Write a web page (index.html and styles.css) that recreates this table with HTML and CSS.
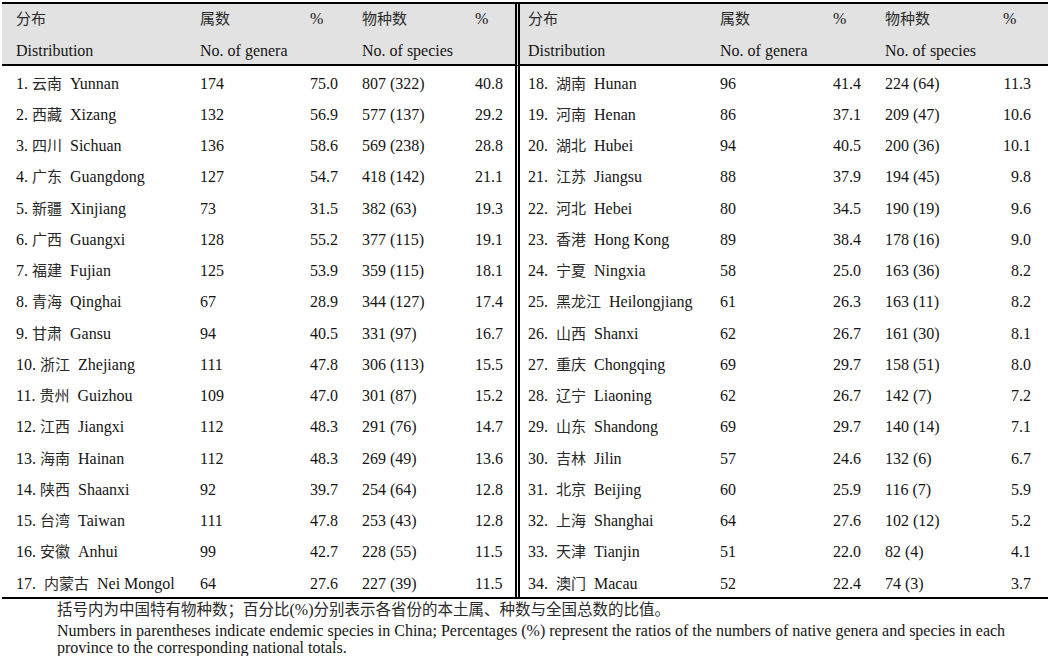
FILE: index.html
```html
<!DOCTYPE html>
<html lang="zh">
<head>
<meta charset="utf-8">
<title>Distribution table</title>
<link rel="stylesheet" href="styles.css">
</head>
<body>
<div class="page">
<table class="dist">
<colgroup>
<col class="c1"><col class="c2"><col class="c3"><col class="c4"><col class="c5">
<col class="c6"><col class="c7"><col class="c8"><col class="c9"><col class="c10">
</colgroup>
<thead>
<tr class="h1">
<th class="first"><span class="zh">分布</span></th><th><span class="zh">属数</span></th><th>%</th><th><span class="zh">物种数</span></th><th>%</th>
<th class="split"><span class="zh">分布</span></th><th><span class="zh">属数</span></th><th>%</th><th><span class="zh">物种数</span></th><th>%</th>
</tr>
<tr class="h2">
<th class="first">Distribution</th><th>No. of genera</th><th></th><th>No. of species</th><th></th>
<th class="split">Distribution</th><th>No. of genera</th><th></th><th>No. of species</th><th></th>
</tr>
</thead>
<tbody>
<tr><td class="first">1. <span class="zh">云南</span>&nbsp; Yunnan</td><td>174</td><td>75.0</td><td>807 (322)</td><td>40.8</td><td class="split">18.&nbsp; <span class="zh">湖南</span>&nbsp; Hunan</td><td>96</td><td>41.4</td><td>224 (64)</td><td class="last">11.3</td></tr>
<tr><td class="first">2. <span class="zh">西藏</span>&nbsp; Xizang</td><td>132</td><td>56.9</td><td>577 (137)</td><td>29.2</td><td class="split">19.&nbsp; <span class="zh">河南</span>&nbsp; Henan</td><td>86</td><td>37.1</td><td>209 (47)</td><td class="last">10.6</td></tr>
<tr><td class="first">3. <span class="zh">四川</span>&nbsp; Sichuan</td><td>136</td><td>58.6</td><td>569 (238)</td><td>28.8</td><td class="split">20.&nbsp; <span class="zh">湖北</span>&nbsp; Hubei</td><td>94</td><td>40.5</td><td>200 (36)</td><td class="last">10.1</td></tr>
<tr><td class="first">4. <span class="zh">广东</span>&nbsp; Guangdong</td><td>127</td><td>54.7</td><td>418 (142)</td><td>21.1</td><td class="split">21.&nbsp; <span class="zh">江苏</span>&nbsp; Jiangsu</td><td>88</td><td>37.9</td><td>194 (45)</td><td class="last">9.8</td></tr>
<tr><td class="first">5. <span class="zh">新疆</span>&nbsp; Xinjiang</td><td>73</td><td>31.5</td><td>382 (63)</td><td>19.3</td><td class="split">22.&nbsp; <span class="zh">河北</span>&nbsp; Hebei</td><td>80</td><td>34.5</td><td>190 (19)</td><td class="last">9.6</td></tr>
<tr><td class="first">6. <span class="zh">广西</span>&nbsp; Guangxi</td><td>128</td><td>55.2</td><td>377 (115)</td><td>19.1</td><td class="split">23.&nbsp; <span class="zh">香港</span>&nbsp; Hong Kong</td><td>89</td><td>38.4</td><td>178 (16)</td><td class="last">9.0</td></tr>
<tr><td class="first">7. <span class="zh">福建</span>&nbsp; Fujian</td><td>125</td><td>53.9</td><td>359 (115)</td><td>18.1</td><td class="split">24.&nbsp; <span class="zh">宁夏</span>&nbsp; Ningxia</td><td>58</td><td>25.0</td><td>163 (36)</td><td class="last">8.2</td></tr>
<tr><td class="first">8. <span class="zh">青海</span>&nbsp; Qinghai</td><td>67</td><td>28.9</td><td>344 (127)</td><td>17.4</td><td class="split">25.&nbsp; <span class="zh">黑龙江</span>&nbsp; Heilongjiang</td><td>61</td><td>26.3</td><td>163 (11)</td><td class="last">8.2</td></tr>
<tr><td class="first">9. <span class="zh">甘肃</span>&nbsp; Gansu</td><td>94</td><td>40.5</td><td>331 (97)</td><td>16.7</td><td class="split">26.&nbsp; <span class="zh">山西</span>&nbsp; Shanxi</td><td>62</td><td>26.7</td><td>161 (30)</td><td class="last">8.1</td></tr>
<tr><td class="first">10. <span class="zh">浙江</span>&nbsp; Zhejiang</td><td>111</td><td>47.8</td><td>306 (113)</td><td>15.5</td><td class="split">27.&nbsp; <span class="zh">重庆</span>&nbsp; Chongqing</td><td>69</td><td>29.7</td><td>158 (51)</td><td class="last">8.0</td></tr>
<tr><td class="first">11. <span class="zh">贵州</span>&nbsp; Guizhou</td><td>109</td><td>47.0</td><td>301 (87)</td><td>15.2</td><td class="split">28.&nbsp; <span class="zh">辽宁</span>&nbsp; Liaoning</td><td>62</td><td>26.7</td><td>142 (7)</td><td class="last">7.2</td></tr>
<tr><td class="first">12. <span class="zh">江西</span>&nbsp; Jiangxi</td><td>112</td><td>48.3</td><td>291 (76)</td><td>14.7</td><td class="split">29.&nbsp; <span class="zh">山东</span>&nbsp; Shandong</td><td>69</td><td>29.7</td><td>140 (14)</td><td class="last">7.1</td></tr>
<tr><td class="first">13. <span class="zh">海南</span>&nbsp; Hainan</td><td>112</td><td>48.3</td><td>269 (49)</td><td>13.6</td><td class="split">30.&nbsp; <span class="zh">吉林</span>&nbsp; Jilin</td><td>57</td><td>24.6</td><td>132 (6)</td><td class="last">6.7</td></tr>
<tr><td class="first">14. <span class="zh">陕西</span>&nbsp; Shaanxi</td><td>92</td><td>39.7</td><td>254 (64)</td><td>12.8</td><td class="split">31.&nbsp; <span class="zh">北京</span>&nbsp; Beijing</td><td>60</td><td>25.9</td><td>116 (7)</td><td class="last">5.9</td></tr>
<tr><td class="first">15. <span class="zh">台湾</span>&nbsp; Taiwan</td><td>111</td><td>47.8</td><td>253 (43)</td><td>12.8</td><td class="split">32.&nbsp; <span class="zh">上海</span>&nbsp; Shanghai</td><td>64</td><td>27.6</td><td>102 (12)</td><td class="last">5.2</td></tr>
<tr><td class="first">16. <span class="zh">安徽</span>&nbsp; Anhui</td><td>99</td><td>42.7</td><td>228 (55)</td><td>11.5</td><td class="split">33.&nbsp; <span class="zh">天津</span>&nbsp; Tianjin</td><td>51</td><td>22.0</td><td>82 (4)</td><td class="last">4.1</td></tr>
<tr><td class="first">17.&nbsp; <span class="zh">内蒙古</span>&nbsp; Nei Mongol</td><td>64</td><td>27.6</td><td>227 (39)</td><td>11.5</td><td class="split">34.&nbsp; <span class="zh">澳门</span>&nbsp; Macau</td><td>52</td><td>22.4</td><td>74 (3)</td><td class="last">3.7</td></tr>
</tbody>
</table>
<div class="note">
<p class="note-zh"><span class="zh">括号内为中国特有物种数；百分比</span>(%)<span class="zh">分别表示各省份的本土属、种数与全国总数的比值。</span></p>
<p class="note-en">Numbers in parentheses indicate endemic species in China; Percentages (%) represent the ratios of the numbers of native genera and species in each province to the corresponding national totals.</p>
</div>
</div>
</body>
</html>
```
FILE: styles.css
```css
html, body {
  margin: 0;
  padding: 0;
  background: #ffffff;
}

body {
  font-family: "Liberation Serif", "Noto Sans CJK SC", serif;
  color: #141414;
}

.page {
  padding: 2px 0 0 2px;
  width: 1046px;
}

.zh {
  font-family: "Noto Sans CJK SC", sans-serif;
  font-size: 15px;
  line-height: 15px;
  font-weight: 400;
  color: #2a2a2a;
}

.dist {
  width: 1046px;
  table-layout: fixed;
  border-collapse: separate;
  border-spacing: 0;
  font-size: 16px;
  line-height: 20px;
  border-top: 2px solid #000;
  border-bottom: 2px solid #000;
}

.c1 { width: 198px; }
.c2 { width: 110px; }
.c3 { width: 52px; }
.c4 { width: 113px; }
.c5 { width: 40px; }
.c6 { width: 205px; }
.c7 { width: 113px; }
.c8 { width: 52px; }
.c9 { width: 118px; }
.c10 { width: 45px; }

.dist th,
.dist td {
  padding: 0;
  text-align: left;
  font-weight: 400;
  white-space: nowrap;
  box-sizing: border-box;
  vertical-align: top;
}

.dist thead th {
  background: #e2e2e2;
}

.dist thead .h1 th {
  height: 30px;
  padding-top: 5px;
}

.dist thead .h2 th {
  height: 32px;
  padding-top: 7px;
  border-bottom: 2px solid #000;
}

.dist tbody td {
  height: 31.25px;
  padding-top: 7.5px;
}

.dist .first {
  padding-left: 14px;
}

.dist .split {
  border-left: 5px double #000;
  padding-left: 8px;
}

.dist tbody td.last {
  text-align: right;
  padding-right: 17px;
}

.note {
  padding-left: 55px;
  width: 960px;
  font-size: 16px;
}

.note p {
  margin: 0;
}

.note-zh {
  line-height: 18px;
}

.note-zh .zh {
  font-size: 15.5px;
  line-height: 18px;
}

.note-en {
  margin-top: 3px !important;
  line-height: 17px;
}
```
